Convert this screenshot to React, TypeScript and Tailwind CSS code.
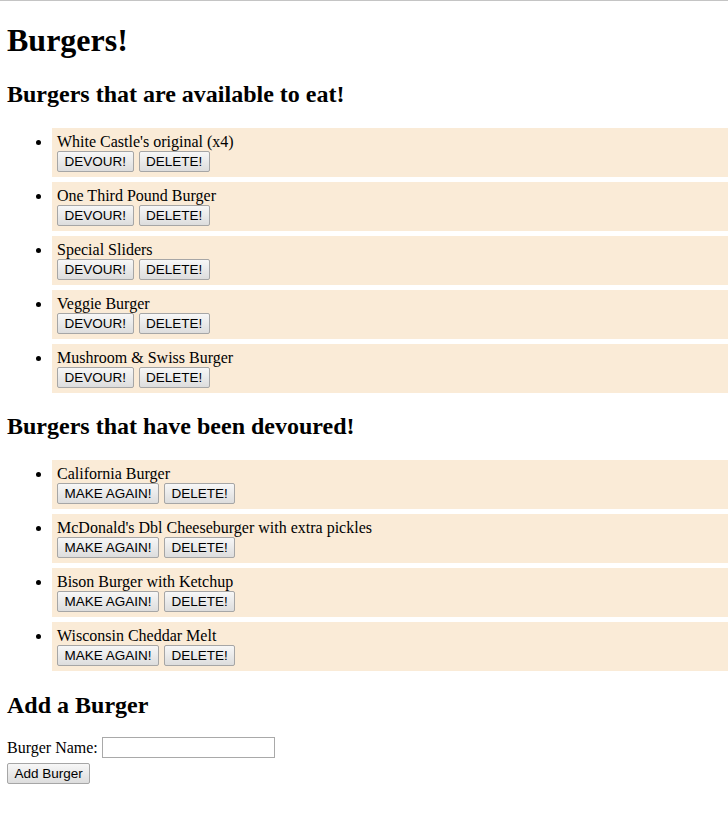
import { useState } from 'react';

interface Burger {
  id: number;
  name: string;
  devoured: boolean;
}

const initialBurgers: Burger[] = [
  { id: 1, name: "White Castle's original (x4)", devoured: false },
  { id: 2, name: 'One Third Pound Burger', devoured: false },
  { id: 3, name: 'Special Sliders', devoured: false },
  { id: 4, name: 'Veggie Burger', devoured: false },
  { id: 5, name: 'Mushroom & Swiss Burger', devoured: false },
  { id: 6, name: 'California Burger', devoured: true },
  { id: 7, name: "McDonald's Dbl Cheeseburger with extra pickles", devoured: true },
  { id: 8, name: 'Bison Burger with Ketchup', devoured: true },
  { id: 9, name: 'Wisconsin Cheddar Melt', devoured: true }
];

const btn =
  "h-[21px] px-[6.5px] border border-[#a6a6a6] rounded-[2px] bg-gradient-to-b from-[#f7f7f7] to-[#dddddd] text-[13.5px] leading-[15px] text-black font-['Liberation_Sans',Arial,sans-serif] hover:from-[#e8f2fb] hover:to-[#cfe4f6]";

export default function App() {
  const [burgers, setBurgers] = useState<Burger[]>(initialBurgers);
  const [newName, setNewName] = useState('');

  const toggle = (id: number) =>
    setBurgers(burgers.map(b => (b.id === id ? { ...b, devoured: !b.devoured } : b)));
  const remove = (id: number) => setBurgers(burgers.filter(b => b.id !== id));
  const add = () => {
    if (!newName.trim()) return;
    setBurgers([...burgers, { id: Date.now(), name: newName.trim(), devoured: false }]);
    setNewName('');
  };

  const renderList = (devoured: boolean) => (
    <ul className="list-disc pl-[45px] mr-[-8px] mt-[20px] mb-0">
      {burgers
        .filter(b => b.devoured === devoured)
        .map(b => (
          <li key={b.id} className="bg-[#faebd7] p-[5px] mb-[5px] last:mb-0 leading-[18px]">
            <div>{b.name}</div>
            <div className="flex gap-[5px]">
              <button className={btn} onClick={() => toggle(b.id)}>
                {devoured ? 'MAKE AGAIN!' : 'DEVOUR!'}
              </button>
              <button className={btn} onClick={() => remove(b.id)}>
                DELETE!
              </button>
            </div>
          </li>
        ))}
    </ul>
  );

  return (
    <div className="min-h-[818px] border-t border-[#c4c4c4] bg-white pl-[7px] pr-[8px] pt-[21px] text-[16px] text-black font-['Liberation_Serif','Times_New_Roman',serif]">
      <h1 className="text-[32px] font-bold leading-[37px]">Burgers!</h1>

      <h2 className="mt-[21px] text-[24px] font-bold leading-[28px]">Burgers that are available to eat!</h2>
      {renderList(false)}

      <h2 className="mt-[19px] text-[24px] font-bold leading-[28px]">Burgers that have been devoured!</h2>
      {renderList(true)}

      <h2 className="mt-[20px] text-[24px] font-bold leading-[28px]">Add a Burger</h2>
      <form
        className="mt-[17px]"
        onSubmit={e => {
          e.preventDefault();
          add();
        }}
      >
        <div className="flex items-center h-[23px]">
          <label htmlFor="burger-name">Burger Name:</label>
          <input
            id="burger-name"
            type="text"
            value={newName}
            onChange={e => setNewName(e.target.value)}
            className="ml-[4px] w-[173px] h-[21px] border border-[#a9a9a9] bg-white px-[2px] text-[13.33px] font-['Liberation_Sans',Arial,sans-serif] outline-none"
          />
        </div>
        <div className="mt-[2px]">
          <button type="submit" className={btn}>
            Add Burger
          </button>
        </div>
      </form>
    </div>
  );
}
